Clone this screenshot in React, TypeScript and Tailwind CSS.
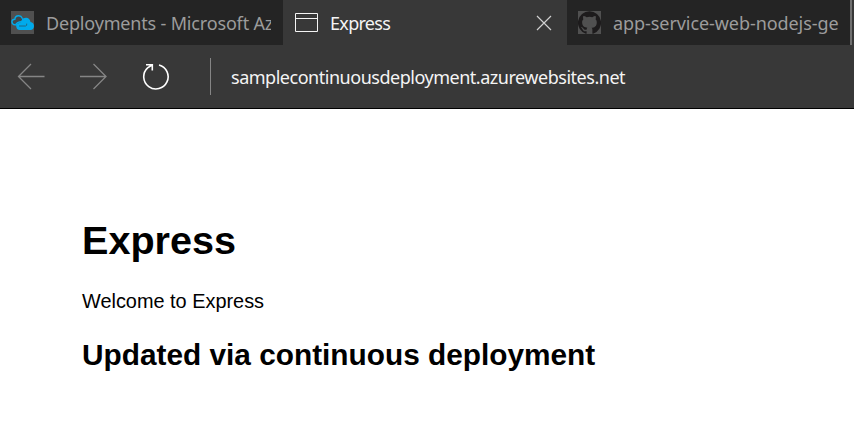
import React from "react";

const uiFont = "font-['Noto_Sans','Open_Sans',sans-serif]";

function CloudIcon() {
  return (
    <svg className="h-[23px] w-[23px] shrink-0 bg-[#505050]" viewBox="0 0 23 23">
      <path
        d="M8 19 Q5.5 18.6 5.3 16 L5 13.4 L10 11 L12 7.6 Q13.4 6.8 15.2 6.8 Q18.8 7 19.5 11 Q22.8 11.6 23 15 Q22.7 18.8 19.5 19 Z"
        fill="#00abec"
      />
      <path
        d="M4.2 13.9 Q.9 13.5 .9 10.8 Q1.1 8.3 3.8 8.3 Q4.3 4.5 7.8 4.7 Q10.3 4.8 11.2 7.2 Q12.2 8 11.5 9.3 Q10.5 11.3 8.3 11 Q6.2 11.4 4.8 13.5 Z"
        fill="#41484c"
        stroke="#00abec"
        strokeWidth="1.4"
      />
      <path d="M8 15 H14.5 Q16.2 14.8 15.7 12.6" fill="none" stroke="#28576b" strokeWidth=".8" />
    </svg>
  );
}

function GithubIcon() {
  return (
    <svg className="h-[23px] w-[23px] shrink-0 bg-[#505050]" viewBox="0 0 24 24">
      <path
        fill="#1d1b1c"
        d="M12 .3a12 12 0 0 0-3.8 23.4c.6.1.8-.3.8-.6v-2c-3.3.7-4-1.6-4-1.6-.6-1.4-1.4-1.8-1.4-1.8-1-.7.1-.7.1-.7 1.2 0 1.9 1.2 1.9 1.2 1 1.8 2.8 1.3 3.5 1 0-.8.4-1.3.7-1.6-2.7-.3-5.5-1.3-5.5-6 0-1.2.5-2.3 1.3-3.1-.2-.4-.6-1.6 0-3.2 0 0 1-.3 3.4 1.2a11.5 11.5 0 0 1 6 0c2.3-1.5 3.3-1.2 3.3-1.2.6 1.6.2 2.8 0 3.2.9.8 1.3 1.9 1.3 3.2 0 4.6-2.8 5.6-5.5 5.9.5.4.9 1 .9 2.2v3.3c0 .3.1.7.8.6A12 12 0 0 0 12 .3"
      />
    </svg>
  );
}

export default function App() {
  return (
    <div className="flex h-[429px] w-[854px] flex-col overflow-hidden bg-white">
      <header className={`bg-[#383838] ${uiFont} text-[18px] leading-6`}>
        <div className="flex h-[45px]">
          <div className="flex w-[283px] shrink-0 items-center bg-[#242424] pl-[11px] text-[#9c9c9c]">
            <CloudIcon />
            <span className="ml-[12px] w-[225px] overflow-hidden whitespace-nowrap tracking-[-0.17px]">
              Deployments - Microsoft Az
            </span>
          </div>
          <div className="flex w-[284px] shrink-0 items-center pl-[12px] text-[#f4f4f4]">
            <svg className="h-[19px] w-[23px] shrink-0" viewBox="0 0 23 19" fill="none" stroke="#f4f4f4">
              <path d="M.5 .5H22.5V18.5H.5ZM.5 5.5H22.5" />
            </svg>
            <span className="ml-[12px] grow tracking-[-0.7px]">Express</span>
            <svg className="mr-[15px] h-[16px] w-[16px]" viewBox="0 0 16 16" stroke="#d0d0d0" strokeWidth="1.2">
              <path d="M1 1L15 15M15 1L1 15" />
            </svg>
          </div>
          <div className="flex grow items-center border-r-2 border-[#707070] bg-[#242424] pl-[11px] text-[#9c9c9c] mr-[2px]">
            <GithubIcon />
            <span className="ml-[12px] whitespace-nowrap tracking-[-0.07px]">app-service-web-nodejs-ge</span>
          </div>
        </div>
        <div className="flex h-[64px] items-center border-b border-black pl-[17px]">
          <svg className="h-[28px] w-[28px]" viewBox="0 0 28 28" fill="none" stroke="#858585" strokeWidth="1.3">
            <path d="M27.5 13.5H1.5M14 1L1.5 13.5L14 26" />
          </svg>
          <svg className="ml-[35px] h-[28px] w-[28px]" viewBox="0 0 28 28" fill="none" stroke="#858585" strokeWidth="1.3">
            <path d="M0 13.5H26M13.5 1L26 13.5L13.5 26" />
          </svg>
          <svg className="ml-[34px] h-[28px] w-[28px]" viewBox="0 0 28 28" fill="none" stroke="#fff" strokeWidth="1.6">
            <path d="M17 1.9A12.2 12.2 0 1 1 5.6 4.8L10 2M4 1.8H10.3V7.6" />
          </svg>
          <div className="ml-[40px] h-[37px] w-px bg-[#858585]" />
          <span className="ml-[20px] whitespace-nowrap tracking-[-0.48px] text-[#f4f4f4]">
            samplecontinuousdeployment.azurewebsites.net
          </span>
        </div>
      </header>
      <main className="pl-[82px] pt-[108px] font-['Liberation_Sans',Arial,sans-serif] text-black">
        <h1 className="text-[39.6px] font-bold leading-[46px]">Express</h1>
        <p className="mt-[27px] text-[19.9px] leading-[23px]">Welcome to Express</p>
        <h2 className="mt-[25px] text-[29.8px] font-bold leading-[34px]">Updated via continuous deployment</h2>
      </main>
    </div>
  );
}
